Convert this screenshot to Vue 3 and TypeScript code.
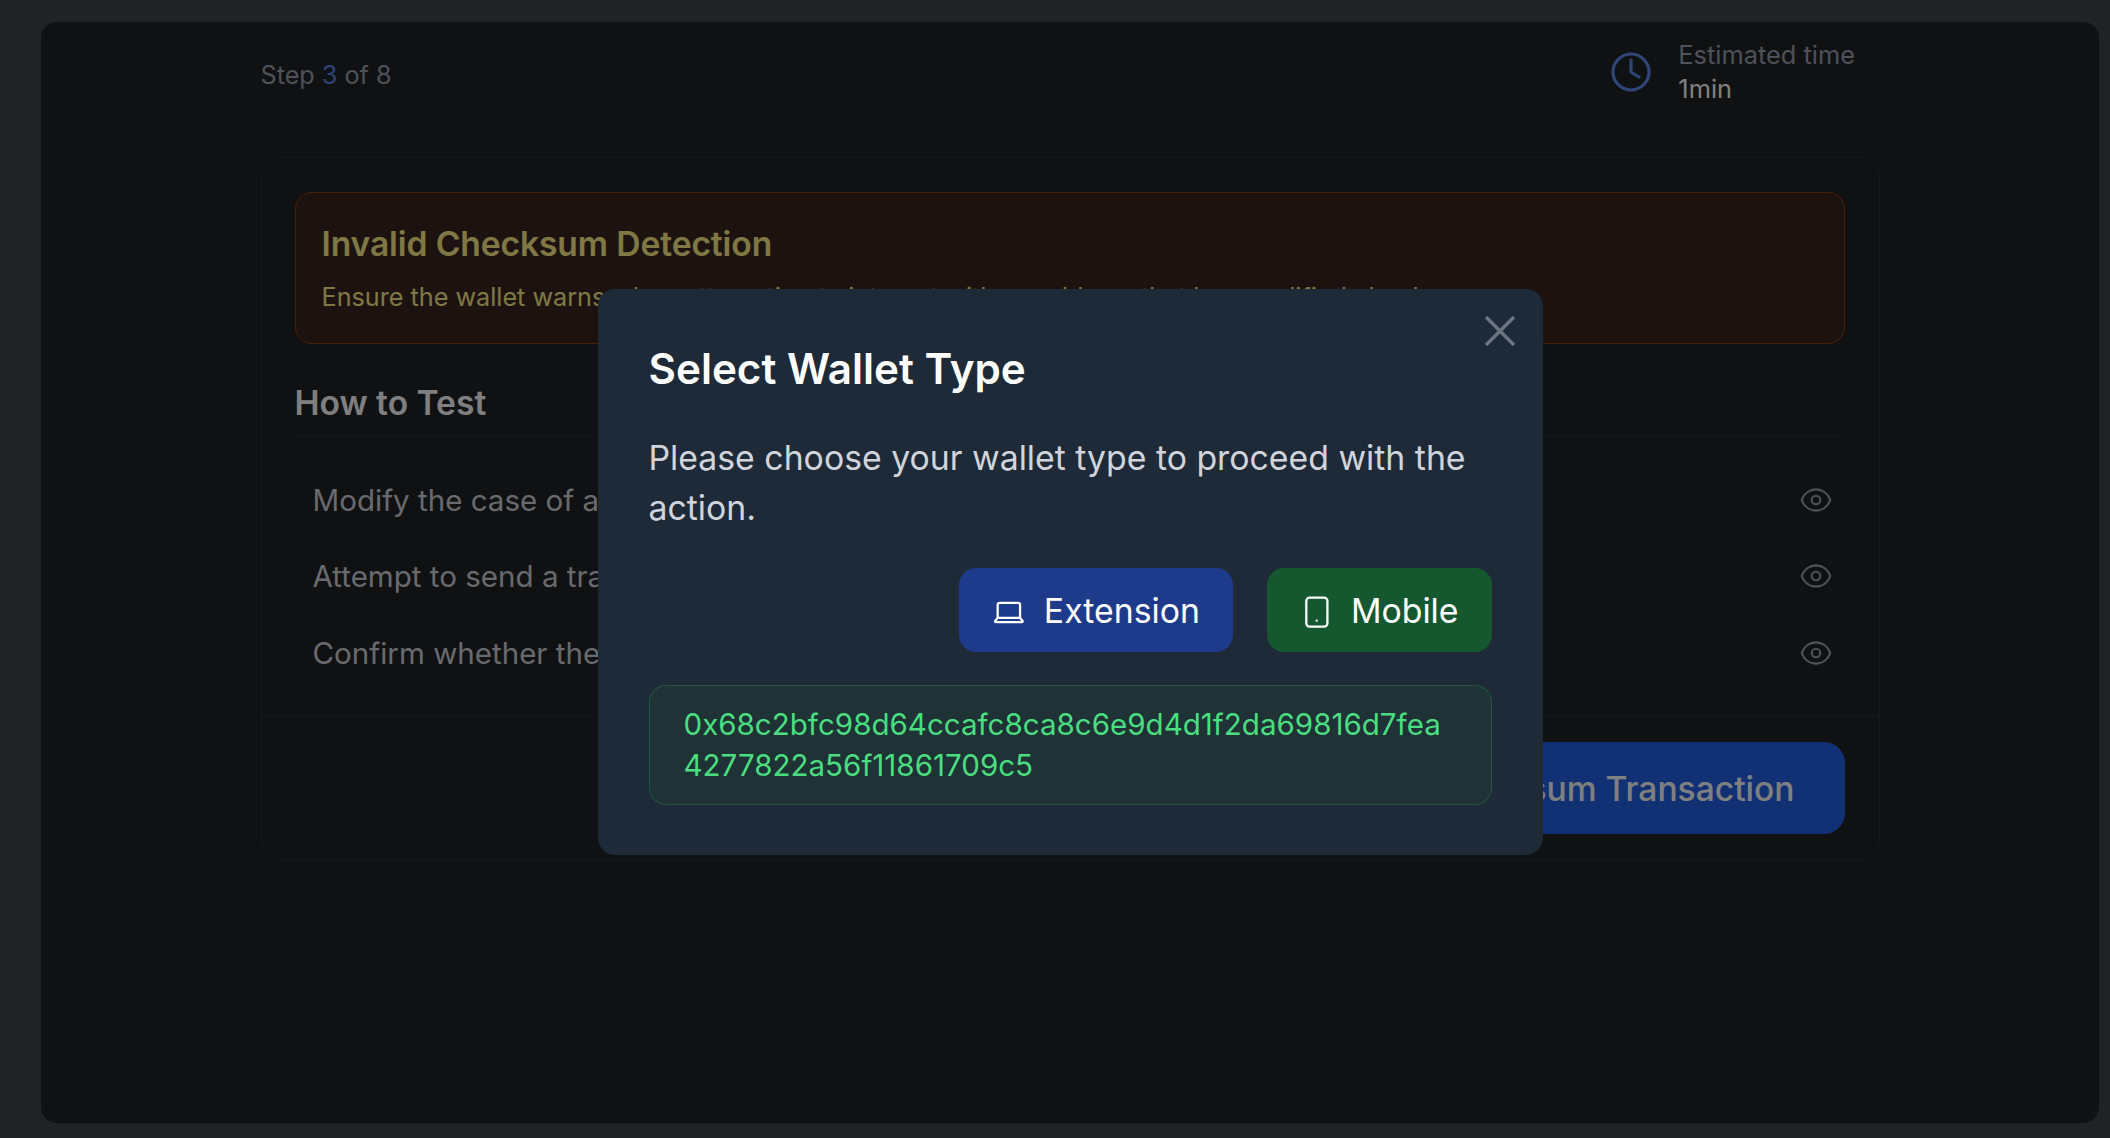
<script setup lang="ts">
const steps = [
  'Modify the case of a valid address',
  'Attempt to send a transaction',
  'Confirm whether the wallet warns',
]
</script>

<template>
  <div class="screen">
    <main class="window">
      <div class="content">
        <header class="top">
          <p class="step">Step <span class="step-num">3</span> of 8</p>
          <div class="estimate">
            <svg class="clock" viewBox="0 0 24 24" fill="none" stroke="currentColor" stroke-width="1.6" stroke-linecap="round" stroke-linejoin="round">
              <circle cx="12" cy="12" r="9" />
              <path d="M12 6v6l4 2.5" />
            </svg>
            <div>
              <p class="estimate-label">Estimated time</p>
              <p class="estimate-value">1min</p>
            </div>
          </div>
        </header>

        <section class="card">
          <div class="card-body">
            <div class="alert">
              <h2>Invalid Checksum Detection</h2>
              <p>Ensure the wallet warns when attempting to interact with an address that has modified checksum</p>
            </div>
            <h3 class="how">How to Test</h3>
            <ul class="rows">
              <li v-for="s in steps" :key="s">
                <span>{{ s }}</span>
                <svg class="eye" viewBox="0 0 24 24" fill="none" stroke="currentColor" stroke-width="1.5" stroke-linecap="round" stroke-linejoin="round">
                  <path d="M2.04 12.32a1 1 0 0 1 0-.64C3.42 7.51 7.36 4.5 12 4.5s8.57 3 9.96 7.18a1 1 0 0 1 0 .64C20.58 16.49 16.64 19.5 12 19.5s-8.57-3-9.96-7.18Z" />
                  <circle cx="12" cy="12" r="3" />
                </svg>
              </li>
            </ul>
          </div>
          <div class="card-foot">
            <button class="send">Send Invalid Checksum Transaction</button>
          </div>
        </section>
      </div>

      <div class="overlay">
        <div class="modal">
          <button class="close" aria-label="Close">
            <svg viewBox="0 0 30 30" fill="none" stroke="currentColor" stroke-width="3.6">
              <path d="M1 1l28 28M29 1L1 29" />
            </svg>
          </button>
          <h2 class="modal-title">Select Wallet Type</h2>
          <p class="modal-text">Please choose your wallet type to proceed with the action.</p>
          <div class="choices">
            <button class="choice ext">
              <svg viewBox="0 0 24 24" fill="none" stroke="currentColor" stroke-width="1.6" stroke-linejoin="round">
                <path d="M3.3 17.6V8.4a1.5 1.5 0 0 1 1.5-1.5h12.8a1.5 1.5 0 0 1 1.5 1.5v9.2" />
                <path d="M3.3 17.6h15.8l1.7 2a.6.6 0 0 1-.5 1H2.1a.6.6 0 0 1-.5-1Z" />
              </svg>
              Extension
            </button>
            <button class="choice mob">
              <svg viewBox="0 0 24 24" fill="none" stroke="currentColor" stroke-width="1.6" stroke-linecap="round">
                <rect x="4.45" y="3.3" width="14.9" height="20.4" rx="2.4" />
                <path d="M11.75 19.5h.01" />
              </svg>
              Mobile
            </button>
          </div>
          <div class="address">0x68c2bfc98d64ccafc8ca8c6e9d4d1f2da69816d7fea4277822a56f11861709c5</div>
        </div>
      </div>
    </main>
  </div>
</template>

<style>
html, body {
  margin: 0;
  background: #212225;
}
</style>

<style scoped>
* {
  box-sizing: border-box;
}
p, h2, h3, ul {
  margin: 0;
  padding: 0;
}
button {
  border: 0;
  font-family: inherit;
  cursor: pointer;
}
.screen {
  height: 1138px;
  padding: 22px 11px 15px 41px;
  background: #212225;
  font-family: Inter, 'Liberation Sans', sans-serif;
  overflow: hidden;
}
.window {
  position: relative;
  height: 100%;
  padding-top: 16px;
  border-radius: 16px;
  background: #212224;
  overflow: hidden;
}
.content {
  width: 1619px;
  margin: 0 auto;
}
.top {
  display: flex;
  align-items: center;
  justify-content: space-between;
  height: 68px;
  margin-bottom: 51px;
  padding-right: 24.5px;
}
.step {
  margin-top: 6px;
  font-size: 25.2px;
  color: #9ca3af;
}
.step-num {
  color: #5b8af0;
}
.estimate {
  display: flex;
  align-items: center;
  gap: 23px;
  font-size: 25.4px;
  line-height: 33.6px;
}
.clock {
  width: 48px;
  height: 48px;
  color: #5b8af0;
}
.estimate-label {
  color: #9ca3af;
}
.estimate-value {
  color: #fff;
}
.card {
  height: 703px;
  border: 1px solid #2e3034;
  border-radius: 21px;
}
.card-body {
  padding: 34px 34px 24.5px 33px;
  border-bottom: 1px solid #2e3034;
}
.alert {
  height: 152px;
  padding: 26px 25px 26px 26px;
  border: 1px solid #92400e;
  border-radius: 17px;
  background: #382420;
  color: #fef08a;
}
.alert h2 {
  font-size: 33.6px;
  line-height: 50px;
  font-weight: 600;
  letter-spacing: -0.1px;
}
.alert p {
  margin-top: 7px;
  font-size: 25.2px;
  line-height: 42px;
}
.how {
  height: 59px;
  margin-top: 34px;
  padding-bottom: 9px;
  border-bottom: 1px solid #2e3034;
  font-size: 33.6px;
  line-height: 50px;
  font-weight: 600;
  color: #fff;
}
.rows {
  list-style: none;
  margin-top: 24.5px;
}
.rows li {
  display: flex;
  align-items: center;
  justify-content: space-between;
  height: 76.5px;
  padding: 0 12px 0 18px;
  font-size: 29.55px;
  color: #d1d5db;
}
.eye {
  width: 34px;
  height: 34px;
  color: #9ca3af;
}
.card-foot {
  display: flex;
  justify-content: flex-end;
  padding: 25.5px 34px;
}
.send {
  height: 92px;
  padding: 0 50px;
  border-radius: 21px;
  background: #2563eb;
  color: #fff;
  font-size: 33.6px;
  font-weight: 500;
}
.overlay {
  position: absolute;
  inset: 0;
  display: flex;
  align-items: center;
  justify-content: center;
  padding-bottom: 1px;
  background: rgba(0, 0, 0, 0.5);
}
.modal {
  position: relative;
  width: 945px;
  padding: 50px 51px;
  border-radius: 17px;
  background: #1e2a38;
}
.close {
  position: absolute;
  top: 27px;
  right: 28px;
  width: 30px;
  height: 30px;
  padding: 0;
  background: none;
  color: #6b7280;
}
.close svg {
  display: block;
}
.modal-title {
  font-size: 42.2px;
  line-height: 59px;
  font-weight: 600;
  color: #fff;
}
.modal-text {
  margin-top: 35px;
  font-size: 33.8px;
  line-height: 50px;
  color: #d1d5db;
}
.choices {
  display: flex;
  justify-content: flex-end;
  gap: 34px;
  margin-top: 35px;
}
.choice {
  display: flex;
  align-items: center;
  gap: 17px;
  height: 84px;
  padding: 0 33px;
  border-radius: 17px;
  color: #fff;
  font-size: 33.8px;
  font-weight: 400;
}
.choice svg {
  width: 34px;
  height: 34px;
  overflow: visible;
}
.ext {
  padding-left: 34px;
  background: #1e3a8a;
}
.mob {
  background: #15582f;
}
.address {
  margin-top: 33px;
  padding: 18px 34px;
  border: 1px solid rgba(34, 197, 94, 0.25);
  border-radius: 17px;
  background: #1f3236;
  color: #4ade80;
  font-size: 29.55px;
  line-height: 41px;
  word-break: break-all;
}
</style>
